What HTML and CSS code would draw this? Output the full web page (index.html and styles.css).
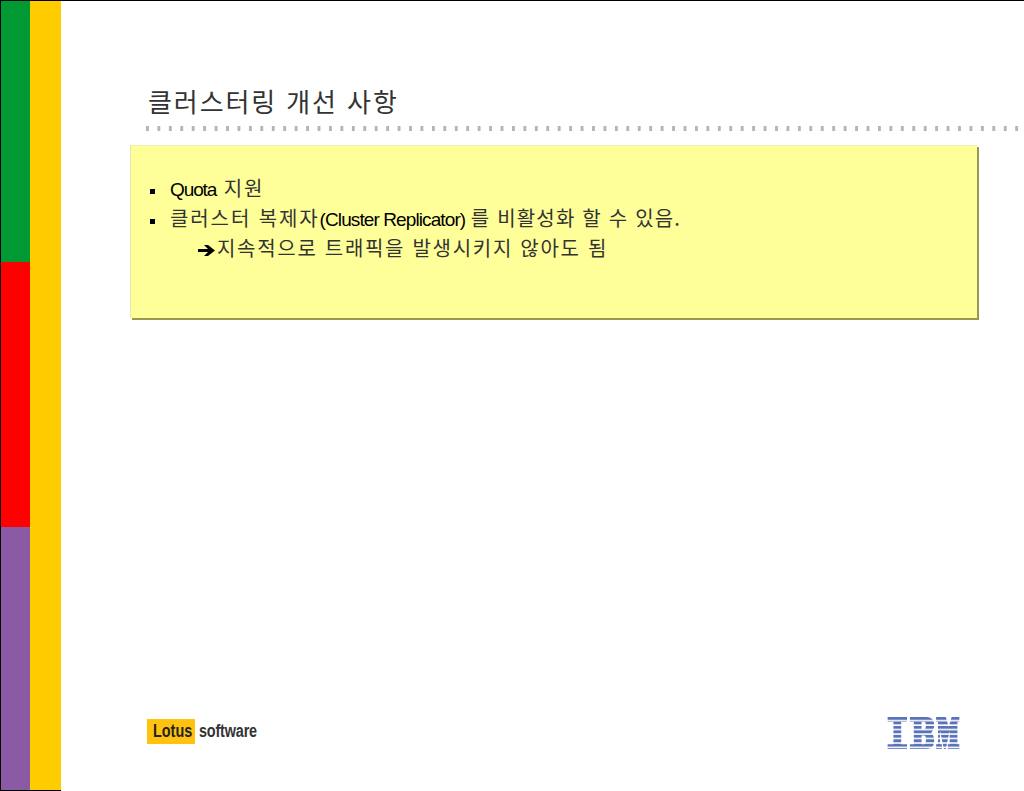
FILE: index.html
```html
<!DOCTYPE html>
<html lang="ko">
<head>
<meta charset="utf-8">
<title>클러스터링 개선 사항</title>
<link rel="stylesheet" href="styles.css">
</head>
<body>
<div class="slide">
  <aside class="rail">
    <div class="rail-colors">
      <div class="c-green"></div>
      <div class="c-red"></div>
      <div class="c-purple"></div>
    </div>
    <div class="rail-yellow"></div>
  </aside>
  <main class="content">
    <h1 class="title">클러스터링 개선 사항</h1>
    <div class="dots"></div>
    <section class="note">
      <ul class="list">
        <li class="item"><span class="latin">Quota</span> 지원</li>
        <li class="item">클러스터 복제자<span class="latin latin-wide">(Cluster Replicator)</span> <span class="tight">를 비활성화 할 수 있음.</span></li>
      </ul>
      <p class="sub"><svg class="arrow" width="17" height="13" viewBox="0 0 17 13"><path d="M0 5H10L6 1H10L17 6.5L10 12H6L10 8H0Z"/></svg>지속적으로 트래픽을 발생시키지 않아도 됨</p>
    </section>
    <footer class="footer">
      <div class="lotus"><span class="lotus-box"><span class="lotus-in">Lotus</span></span><span class="lotus-word">software</span></div>
      <svg class="ibm" width="73" height="32" viewBox="0 0 74 33" aria-label="IBM">
        <defs>
          <pattern id="stripes" width="74" height="4.6" patternUnits="userSpaceOnUse">
            <rect width="74" height="3" fill="#5a72b8"/>
          </pattern>
        </defs>
        <path fill="url(#stripes)" d="M0 0H20V5H14V28H20V33H0V28H6V5H0Z"/>
        <path fill="url(#stripes)" fill-rule="evenodd" d="M23 0H40C46 0 48 4 48 8C48 12 47 14 45 16C47 18 48 21 48 25C48 29 46 33 40 33H23V28H27V5H23ZM35 5V13H38C40 13 40 5 38 5ZM35 19V28H38C40 28 40 19 38 19Z"/>
        <path fill="url(#stripes)" d="M50 0H60L63 10L66 0H74V5H72V28H74V33H62V28H64V14L60 33H58L54 14V28H56V33H50V28H52V5H50Z"/>
      </svg>
    </footer>
  </main>
</div>
</body>
</html>
```
FILE: styles.css
```css
html, body {
  margin: 0;
  padding: 0;
  background: #fff;
}
.slide {
  display: flex;
  width: 1024px;
  height: 791px;
  box-sizing: border-box;
  border-top: 1px solid #000;
  overflow: hidden;
}
.rail {
  display: flex;
  flex: none;
  width: 61px;
  box-sizing: border-box;
  border-left: 1px solid #000;
  border-bottom: 1px solid #000;
}
.rail-colors {
  display: flex;
  flex-direction: column;
  width: 29px;
}
.c-green { height: 261px; background: #009933; }
.c-red { height: 265px; background: #ff0000; }
.c-purple { flex: 1; background: #8a5aa5; }
.rail-yellow { width: 31px; background: #ffcc00; }
.content {
  flex: 1;
  min-width: 0;
  display: flex;
  flex-direction: column;
  padding-left: 69px;
}
.title {
  margin: 83px 0 0 18px;
  font: 400 26px/34px "Noto Sans CJK KR", sans-serif;
  letter-spacing: 1.9px;
  color: #333;
  height: 34px;
}
.dots {
  margin: 8px 0 0 16px;
  height: 5px;
  background-image: linear-gradient(to right, #b5b5b5 3px, transparent 3px);
  background-size: 11.45px 5px;
  background-repeat: repeat-x;
}
.note {
  width: 847px;
  height: 173px;
  margin-top: 14px;
  box-sizing: border-box;
  background: #ffff99;
  border-top: 1px solid #f0efb0;
  border-left: 1px solid #e6e6a8;
  box-shadow: 2px 2px 0 #99994d;
  padding: 27px 0 0 19px;
  font: 400 20px/30px "Noto Sans CJK KR", "Liberation Sans", sans-serif;
  color: #333;
}
.list {
  margin: 0;
  padding: 0;
  list-style: none;
}
.item {
  position: relative;
  padding-left: 20px;
  height: 30px;
  letter-spacing: 1.9px;
  white-space: nowrap;
}
.item::before {
  content: "";
  position: absolute;
  left: 0;
  top: 16px;
  width: 5px;
  height: 5px;
  background: #000;
}
.latin {
  font-family: "Liberation Sans", sans-serif;
  font-size: 19px;
  letter-spacing: -1.1px;
  color: #000;
}
.latin-wide {
  letter-spacing: -0.9px;
}
.tight {
  margin-left: -2px;
  letter-spacing: 1.2px;
}
.sub {
  margin: 0;
  padding-left: 48px;
  letter-spacing: 1.7px;
  white-space: nowrap;
}
.arrow {
  vertical-align: -1px;
  margin-right: 2px;
}
.footer {
  display: flex;
  justify-content: space-between;
  align-items: flex-start;
  margin: auto 64px 42px 17px;
}
.lotus {
  display: flex;
  align-items: center;
  gap: 4px;
  margin-top: 2px;
  font-family: "Liberation Sans", sans-serif;
  font-size: 18px;
  line-height: 25px;
}
.lotus-box {
  background: #ffc20e;
  width: 48px;
  height: 25px;
  padding-left: 6px;
  box-sizing: border-box;
  font-weight: 700;
  color: #222;
}
.lotus-in,
.lotus-word {
  display: inline-block;
  transform-origin: left center;
  transform: scaleX(0.8);
}
.lotus-word {
  color: #333;
  font-weight: 700;
  letter-spacing: -0.2px;
}
.ibm { display: block; }
```
